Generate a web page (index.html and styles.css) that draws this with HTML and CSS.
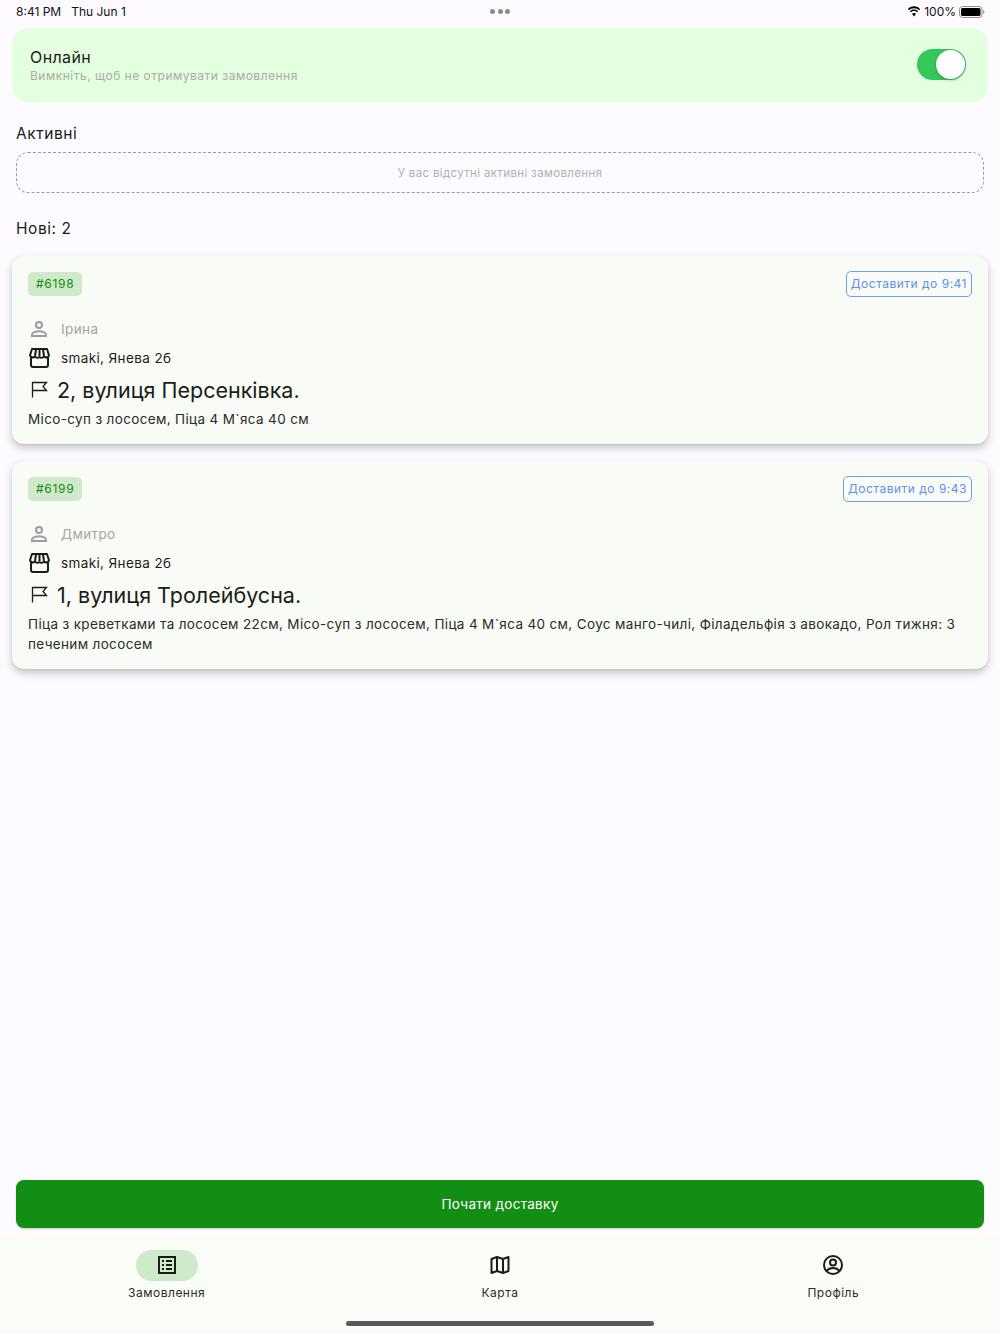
FILE: index.html
```html
<!DOCTYPE html>
<html lang="uk">
<head>
<meta charset="utf-8">
<title>Замовлення</title>
<link rel="stylesheet" href="styles.css">
</head>
<body>
<div class="screen">
  <div class="status">
    <div class="status-time"><span>8:41 PM</span><span>Thu Jun 1</span></div>
    <div class="status-dots"><i></i><i></i><i></i></div>
    <div class="status-right">
      <svg class="wifi" width="14" height="11" viewBox="0 0 14 11"><path d="M7 2.300c2 0 3.800.8 5.100 2l1-1.100C11.900 1.300 9.600.3 7 .3S2.100 1.300.9 3.200l1 1.100c1.300-1.200 3.100-2 5.100-2z" fill="#000"/><path d="M7 5.100c1.200 0 2.300.5 3.100 1.200l1-1.100C10 4.100 8.600 3.500 7 3.500s-3 .6-4.100 1.700l1 1.100C4.700 5.600 5.800 5.100 7 5.100z" fill="#000"/><path d="M7 7c-.8 0-1.500.3-2 .8L7 10.500l2-2.700C8.500 7.300 7.800 7 7 7z" fill="#000"/></svg>
      <span>100%</span>
      <svg width="26" height="12" viewBox="0 0 26 12"><rect x=".5" y=".5" width="22.500" height="11" rx="3" fill="none" stroke="#8e8e8e"/><rect x="2" y="2" width="19.500" height="8" rx="1.500" fill="#000"/><path d="M24.200 4v4c.7-.2 1.200-1 1.200-2s-.5-1.800-1.200-2z" fill="#8e8e8e"/></svg>
    </div>
  </div>

  <section class="online">
    <div class="online-text">
      <div class="online-title">Онлайн</div>
      <div class="online-sub">Вимкніть, щоб не отримувати замовлення</div>
    </div>
    <div class="switch"><span class="knob"></span></div>
  </section>

  <h2 class="heading heading-active">Активні</h2>
  <div class="empty">У вас відсутні активні замовлення</div>
  <h2 class="heading heading-new">Нові: 2</h2>

  <article class="card card-first">
    <div class="card-top">
      <span class="tag">#6198</span>
      <span class="deadline">Доставити до 9:41</span>
    </div>
    <div class="row row-person">
      <svg class="ico" viewBox="0 0 24 24"><path fill="none" stroke="#9c9c9c" stroke-width="2" d="M11 5a3 3 0 1 1 0 6 3 3 0 0 1 0-6zM4 19v-1.300C4 15.500 8 14.300 11 14.300s7 1.200 7 3.400V19z"/></svg>
      <span>Ірина</span>
    </div>
    <div class="row row-shop">
      <svg class="ico" viewBox="0 0 24 24"><path fill="none" stroke="#1a1c18" stroke-width="2" stroke-linejoin="round" d="M4 3h15l2 6.200a2.800 2.800 0 0 1-4.800 1.300 3.300 3.300 0 0 1-4.700.5 3.300 3.300 0 0 1-4.700-.5A2.800 2.800 0 0 1 2 9.200zM3 11.500V19a2 2 0 0 0 2 2h13a2 2 0 0 0 2-2v-7.500M8 3.500 7 10M11.500 3.500V10M15 3.500l1 6.500"/></svg>
      <span>smaki, Янева 2б</span>
    </div>
    <div class="row row-addr">
      <svg class="ico" viewBox="0 0 24 24"><path fill="none" stroke="#1a1c18" stroke-width="1.300" d="M4.500 19.500v-15h14l-3.500 4 3.500 4h-14"/></svg>
      <span>2, вулиця Персенківка.</span>
    </div>
    <p class="items">Місо-суп з лососем, Піца 4 М`яса 40 см</p>
  </article>

  <article class="card">
    <div class="card-top">
      <span class="tag">#6199</span>
      <span class="deadline">Доставити до 9:43</span>
    </div>
    <div class="row row-person">
      <svg class="ico" viewBox="0 0 24 24"><path fill="none" stroke="#9c9c9c" stroke-width="2" d="M11 5a3 3 0 1 1 0 6 3 3 0 0 1 0-6zM4 19v-1.300C4 15.500 8 14.300 11 14.300s7 1.200 7 3.400V19z"/></svg>
      <span>Дмитро</span>
    </div>
    <div class="row row-shop">
      <svg class="ico" viewBox="0 0 24 24"><path fill="none" stroke="#1a1c18" stroke-width="2" stroke-linejoin="round" d="M4 3h15l2 6.200a2.800 2.800 0 0 1-4.800 1.300 3.300 3.300 0 0 1-4.700.5 3.300 3.300 0 0 1-4.700-.5A2.800 2.800 0 0 1 2 9.200zM3 11.500V19a2 2 0 0 0 2 2h13a2 2 0 0 0 2-2v-7.500M8 3.500 7 10M11.500 3.500V10M15 3.500l1 6.500"/></svg>
      <span>smaki, Янева 2б</span>
    </div>
    <div class="row row-addr">
      <svg class="ico" viewBox="0 0 24 24"><path fill="none" stroke="#1a1c18" stroke-width="1.300" d="M4.500 19.500v-15h14l-3.500 4 3.500 4h-14"/></svg>
      <span>1, вулиця Тролейбусна.</span>
    </div>
    <p class="items">Піца з креветками та лососем 22см, Місо-суп з лососем, Піца 4 М`яса 40 см, Соус манго-чилі, Філадельфія з авокадо, Рол тижня: З печеним лососем</p>
  </article>

  <div class="spacer"></div>

  <button class="start">Почати доставку</button>

  <nav class="nav">
    <div class="nav-item">
      <div class="nav-ico active">
        <svg width="24" height="24" viewBox="0 0 24 24"><path fill="none" stroke="#1a1c18" stroke-width="2" d="M4 4h16v16H4z"/><path fill="#1a1c18" d="M7 7h2v2H7zM11 7h6v2h-6zM7 11h2v2H7zM11 11h6v2h-6zM7 15h2v2H7zM11 15h6v2h-6z"/></svg>
      </div>
      <span>Замовлення</span>
    </div>
    <div class="nav-item">
      <div class="nav-ico">
        <svg width="24" height="24" viewBox="0 0 24 24"><path fill="none" stroke="#1a1c18" stroke-width="2" stroke-linejoin="round" d="M3.500 6 9 4l6 2 5.500-2v14L15 20l-6-2-5.500 2zM9 4v14M15 6v14"/></svg>
      </div>
      <span>Карта</span>
    </div>
    <div class="nav-item">
      <div class="nav-ico">
        <svg width="24" height="24" viewBox="0 0 24 24"><circle cx="12" cy="12" r="9" fill="none" stroke="#1a1c18" stroke-width="2"/><circle cx="12" cy="9.500" r="3" fill="none" stroke="#1a1c18" stroke-width="2"/><path fill="none" stroke="#1a1c18" stroke-width="2" d="M5.500 18c1.500-2 4-3 6.500-3s5 1 6.500 3"/></svg>
      </div>
      <span>Профіль</span>
    </div>
    <div class="home-bar"></div>
  </nav>
</div>
</body>
</html>
```

FILE: styles.css
```css
* { box-sizing: border-box; }
html, body { margin: 0; padding: 0; }
body { background: #fdfbff; font-family: Inter, Roboto, sans-serif; color: #1a1c18; }
.screen { width: 1000px; height: 1334px; display: flex; flex-direction: column; overflow: hidden; }

.status { height: 28px; flex: none; padding: 0 15px 5px 16px; display: flex; align-items: center; justify-content: space-between; position: relative; font-size: 12px; color: #111; }
.status-time { display: flex; gap: 10px; }
.status-dots { position: absolute; left: 490px; top: 9px; display: flex; gap: 2.500px; }
.status-dots i { width: 5px; height: 5px; border-radius: 50%; background: #8b8b8b; }
.status-right { display: flex; align-items: center; gap: 3px; }

.online { flex: none; margin: 0 12px; height: 74px; border-radius: 16px; background: #e4ffe0; padding: 0 22px 0 18px; display: flex; align-items: center; justify-content: space-between; }
.online-title { font-size: 16px; line-height: 22px; letter-spacing: .4px; }
.online-sub { font-size: 12px; line-height: 16px; letter-spacing: .5px; color: #a9aca6; }
.switch { width: 49px; height: 31px; margin-top: -1px; border-radius: 16px; background: #34c759; position: relative; }
.knob { position: absolute; right: 1px; top: 1px; width: 29px; height: 29px; border-radius: 50%; background: #fff; box-shadow: 0 1px 3px rgba(0,0,0,.25); }

.heading { margin: 0; padding: 0 16px; flex: none; font-size: 15.500px; line-height: 22px; font-weight: 400; letter-spacing: .55px; }
.heading-active { margin-top: 21px; }
.heading-new { margin-top: 25px; }
.empty { flex: none; margin: 7px 16px 0; height: 41px; border: 1px dashed #9b9b9b; border-radius: 12px; display: flex; align-items: center; justify-content: center; font-size: 11.500px; letter-spacing: .35px; color: #b0b0b0; }

.card { flex: none; margin: 17px 12px 0; padding: 16px 16px 15px; border-radius: 12px; background: #f9fbf6; box-shadow: 0 4px 8px rgba(0,0,0,.22), 0 1px 2px rgba(0,0,0,.08); }
.card-first { margin-top: 16px; }
.card-top { display: flex; justify-content: space-between; align-items: flex-start; height: 42px; }
.tag { height: 24px; padding: 0 8px; border-radius: 5px; background: #cfe9cb; color: #128c12; font-size: 12px; letter-spacing: .7px; line-height: 24px; }
.deadline { height: 26px; margin-top: -1px; padding: 0 4px; border: 1.500px solid #6f9ff0; border-radius: 5px; color: #5f92ea; font-size: 12px; line-height: 23px; letter-spacing: .5px; }

.row { display: flex; align-items: center; }
.ico { width: 24px; height: 24px; flex: none; }
.row-person { height: 30px; gap: 9px; font-size: 13.500px; letter-spacing: .38px; color: #a4a6a2; }
.row-shop { height: 28px; gap: 9px; font-size: 13.500px; letter-spacing: .38px; }
.row-addr { height: 36px; gap: 5px; font-size: 21.500px; }
.items { margin: 1px 0 0; font-size: 13.500px; line-height: 20px; letter-spacing: .35px; color: #2a2c28; }

.spacer { flex: 1; }
.start { flex: none; margin: 0 16px 9px; height: 48px; padding: 0 0 1px; border: 0; border-radius: 8px; background: #138e14; color: #fff; font-family: inherit; font-size: 13.500px; letter-spacing: .3px; box-shadow: 0 1px 2px rgba(0,0,0,.2); }

.nav { flex: none; height: 97px; background: #fafdf7; display: grid; grid-template-columns: repeat(3, 1fr); position: relative; padding-top: 13px; }
.nav-item { display: flex; flex-direction: column; align-items: center; font-size: 12px; letter-spacing: .5px; color: #2a2c28; }
.nav-ico { width: 62px; height: 31px; border-radius: 16px; display: flex; align-items: center; justify-content: center; margin-bottom: 4px; }
.nav-ico svg { margin-top: -1px; }
.nav-ico.active { background: #cfe9cb; }
.home-bar { position: absolute; left: 346px; bottom: 8px; width: 308px; height: 5px; border-radius: 3px; background: #5a5a5a; }
```
